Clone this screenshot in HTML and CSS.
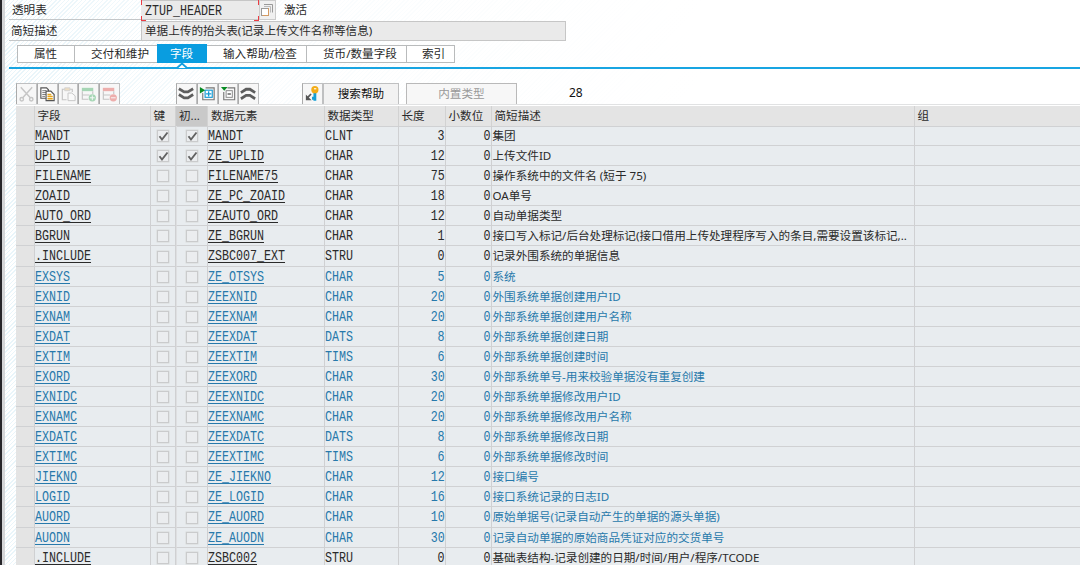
FILE: index.html
```html
<!DOCTYPE html>
<html lang="zh-CN">
<head>
<meta charset="utf-8">
<title>透明表 ZTUP_HEADER</title>
<link rel="stylesheet" href="styles.css">
</head>
<body>
<div class="window">
  <header class="form">
    <div class="form-row first">
      <span class="label">透明表</span>
      <span class="input focus"><span class="mono">ZTUP_HEADER</span><i class="corner tl"></i><i class="corner tr"></i><i class="corner bl"></i><i class="corner br"></i></span>
      <span class="match"><svg width="14" height="14" viewBox="0 0 14 14" fill="none"><path d="M4 1.500h8.500v8" stroke="#999"/><path d="M4 3.500h6.500v6" stroke="#bbb"/><rect x="1.500" y="5.500" width="7" height="7" fill="#fff" stroke="#999"/><path d="M8.500 5v7.500h-6" stroke="#d59a61"/></svg></span>
      <span class="status">激活</span>
    </div>
    <div class="form-row second">
      <span class="label">简短描述</span>
      <span class="input long">单据上传的抬头表(记录上传文件名称等信息)</span>
    </div>
  </header>
  <nav class="tabs">
    <span class="tab t1">属性</span><span class="tab t2">交付和维护</span><span class="tab active">字段</span><span class="tab t4">输入帮助/检查</span><span class="tab t5">货币/数量字段</span><span class="tab t6">索引</span>
  </nav>
  <div class="tabline"><svg class="notch" width="12" height="7" viewBox="0 0 12 7"><path d="M1 6 6 1.500 11 6" fill="#fff" stroke="#14a0e0" stroke-width="1.700"/></svg></div>
  <div class="toolbar">
    <div class="group">
      <span class="btn off"><svg viewBox="0 0 20 20" fill="none" stroke="#777" stroke-width="1.500"><path d="M4 3l10 11M16 3L6 14"/><circle cx="5" cy="15.500" r="1.800"/><circle cx="15" cy="15.500" r="1.800"/></svg></span>
      <span class="btn"><svg viewBox="0 0 20 20" fill="none"><path d="M3 3.500h6l2 2v9H3z" fill="#fff" stroke="#555" stroke-width="1.200"/><path d="M4.500 6.500h4M4.500 8.500h4M4.500 10.500h4M4.500 12.500h3" stroke="#777"/><path d="M8.500 7h5l3.500 3.500v6.500H8.500z" fill="#fff" stroke="#555" stroke-width="1.200"/><path d="M10 10.500h4M10 12.700h5.500M10 15h5.500" stroke="#e6a51c" stroke-width="1.500"/></svg></span>
      <span class="btn off"><svg viewBox="0 0 20 20" fill="none"><path d="M8 16H3.500V5H14v3" stroke="#777" stroke-width="1.200"/><path d="M6 3.500h5.500v3H6z" fill="#ddb46a" stroke="#999"/><path d="M9.500 9h4l3.500 3v5H9.500z" fill="#fff" stroke="#777"/></svg></span>
      <span class="btn off"><svg viewBox="0 0 20 20" fill="none"><rect x="3" y="3.500" width="12" height="3.500" fill="#24a34b"/><path d="M3.500 7v8.500H10M3.500 11H11M14.500 7v3" stroke="#777" stroke-width="1.200"/><circle cx="14" cy="14" r="3.800" fill="#24a34b"/><path d="M11.500 14h5M14 11.500v5" stroke="#fff"/></svg></span>
      <span class="btn off"><svg viewBox="0 0 20 20" fill="none"><rect x="3" y="3.500" width="12" height="3.500" fill="#df3935"/><path d="M3.500 7v8.500H10M3.500 11H11M14.500 7v3" stroke="#777" stroke-width="1.200"/><circle cx="14" cy="14" r="3.800" fill="#df3935"/><path d="M11.500 14h5" stroke="#fff"/></svg></span>
    </div>
    <div class="group nav">
      <span class="btn"><svg viewBox="0 0 20 20" fill="none" stroke="#5d5d5d" stroke-width="2.900"><path d="M2 4.500l5.500 3.300h4L17 4.500M2 10.500l5.500 3.500h4l5.500-3.500"/></svg></span>
      <span class="btn"><svg viewBox="0 0 20 20" fill="none"><path d="M8 3.500h9v12.500H5V9" stroke="#777" stroke-width="1.200"/><rect x="7.500" y="6" width="7.500" height="7.500" fill="#fff" stroke="#159bd5" stroke-width="1.200"/><path d="M8.500 9.800h5.500M11.200 7v5.500" stroke="#159bd5" stroke-width="1.400"/><path d="M2 2.500l5.500 3.500L2 9.500z" fill="#078b23"/></svg></span>
      <span class="btn"><svg viewBox="0 0 20 20" fill="none"><path d="M9 3.500h7.500V16H5V8" stroke="#777" stroke-width="1.200"/><rect x="7.500" y="6.500" width="6.500" height="7" fill="#fff" stroke="#888"/><path d="M9 10h3.500" stroke="#444" stroke-width="1.300"/><path d="M2 2.500h7L5.500 6.500z" fill="#078b23"/></svg></span>
      <span class="btn"><svg viewBox="0 0 20 20" fill="none" stroke="#5d5d5d" stroke-width="2.900"><path d="M2 8.500L7.500 5h4L17 8.500M2 15l5.500-3.500h4L17 15"/></svg></span>
    </div>
    <div class="group help">
      <span class="btn"><svg viewBox="0 0 20 20" fill="none"><path d="M12.500 8v9M11 14.500h-1.500" stroke="#169fd5" stroke-width="3"/><circle cx="12.500" cy="5.500" r="3.800" fill="#f3ac16"/><path d="M11.500 4.500h2.500" stroke="#fff" stroke-width="1.200"/><path d="M8.500 10l-4 4" stroke="#555" stroke-width="1.800"/><path d="M3 10.500v6h6z" fill="#555"/></svg></span>
      <span class="textbtn search">搜索帮助</span>
    </div>
    <span class="textbtn builtin">内置类型</span>
    <span class="count">28</span>
  </div>
  <main class="table" id="table"></main>
</div>
<script src="script.js"></script>
</body>
</html>
```
FILE: styles.css
```css
* { box-sizing: border-box; }
body {
  margin: 0;
  height: 565px;
  overflow: hidden;
  font: 11.6px/16px "Noto Sans", "Noto Sans CJK SC", sans-serif;
  color: #2a2a2a;
  background: #fff;
}
.window {
  height: 565px;
  display: flex;
  flex-direction: column;
  border-left: 2px solid #262529;
  background:
    linear-gradient(#d5d6d8, #d5d6d8) 0 0 / 3px 100% no-repeat,
    linear-gradient(90deg, transparent 14px, rgba(255, 255, 255, .7) 240px, #fff 700px),
    repeating-linear-gradient(135deg, #fff 0 2px, #e9f5fa 2px 3px);
}
.form { height: 43px; flex: none; padding-left: 7px; }
.form-row { display: flex; align-items: stretch; white-space: nowrap; }
.first { height: 21px; }
.second { height: 20px; }
.label { width: 132px; padding: 2px 0 0 3px; border-bottom: 1px solid #c4c7c9; }
.second .label { padding: 2px 0 0 2px; }
.input { position: relative; width: 118px; padding: 2px 0 0 4px; background: #eaeaea; border: 1px solid #c6c6c6; }
.first .input { border-width: 1px 0; }
.input.long { width: 425px; padding: 1px 0 0 3px; }
.match { width: 17px; border: 1px solid #ccc; background: #f0f0f0; display: flex; align-items: center; }
.first .match, .first .input, .first .label { height: 20px; }
.first .match svg { flex: none; }
.status { padding: 2px 0 0 8px; }
.corner { position: absolute; width: 5px; height: 5px; border: 0 solid #ec3c43; }
.tl { top: -1px; left: 0; border-left-width: 1px; }
.tr { top: -1px; right: 0; border-right-width: 1px; }
.bl { bottom: -2px; left: 0; border-left-width: 1px; border-bottom-width: 1px; }
.br { bottom: -2px; right: 0; border-right-width: 1px; border-bottom-width: 1px; }
.mono {
  display: inline-block;
  font: 14px/15px "Liberation Mono", monospace;
  transform: scaleX(.8333);
  transform-origin: left center;
  white-space: pre;
}
.tabs { height: 20px; flex: none; display: flex; align-items: flex-start; padding: 2px 0 0 15px; }
.tab { height: 18px; border: 1px solid #b9bbbc; border-right-width: 0; background: #fff; white-space: nowrap; line-height: 15px; }
.t1 { width: 57px; padding-left: 16px; }
.t2 { width: 83px; padding-left: 16px; }
.active { width: 50px; height: 19px; margin-top: -1px; padding-left: 12px; line-height: 17px; background: #099de0; border-color: #099de0; color: #fff; }
.t4 { width: 99px; padding-left: 16px; border-left: 0; }
.t5 { width: 100px; padding-left: 16px; }
.t6 { width: 49px; padding-left: 15px; border-right-width: 1px; }
.tabline { position: relative; height: 2px; flex: none; margin: 4px 0 0 7px; background: #18a5e2; }
.notch { position: absolute; left: 167px; top: -5px; }
.toolbar { height: 35px; flex: none; display: flex; align-items: flex-end; padding-left: 14px; }
.group { display: flex; }
.nav { margin-left: 56px; }
.help { margin-left: 43px; }
.btn, .textbtn { height: 21px; border: 1px solid #bfc0c1; border-bottom: 0; background: #f7f7f7; }
.btn { width: 20.8px; border-left-color: #aaa; }
.btn svg { display: block; width: 19px; height: 20px; }
.off svg { opacity: .38; }
.textbtn { line-height: 19px; text-align: center; color: #111; }
.search { width: 76px; background: #f2f2f2; }
.builtin { width: 111px; margin-left: 7px; border-color: #b9b9b9; color: #999; }
.count { margin-left: 52px; height: 19px; color: #111; font-size: 12px; }
.table { flex: none; margin-left: 14px; border-top: 1px solid #e1e2e3; }
.row {
  display: grid;
  grid-template-columns: 18.5px 116px 25.5px 32px 116.500px 74px 47px 46px 423px 1fr;
  height: 20.08px;
  color: #2a2a2a;
  background: #e8ecef;
}
.row.blue { color: #2779ab; }
.row.head { height: 21px; border-top: 1px solid #fff; background: #e4e4e4; }
.cell { min-width: 0; border-right: 1px solid #cfd0d2; border-bottom: 1px solid #d0d1d3; white-space: nowrap; line-height: 19px; height: 100%; }
.cell:last-child { border-right: 0; }
.cell .mono { display: block; width: max-content; margin-top: 3px; line-height: 15px; }
.select { background: #e4e4e4; }
.link .mono { text-decoration: underline; text-decoration-thickness: 1px; text-underline-offset: 2px; }
.number .mono { margin-left: auto; transform-origin: right center; }
.number { padding-right: 0; }
.desc { padding-left: 1px; }
.check { display: flex; align-items: center; padding: 1px 0 0 6px; }
.init { padding-left: 9px; border-left: 1px solid #dedfe1; }
.box { width: 12px; height: 12px; border: 1px solid #cacbcc; background: #ebedef; box-shadow: 0 0 0 .5px #d8d9da; }
.box svg { display: block; width: 12px; height: 12px; margin: -1px; }
.head .cell { padding-left: 3px; line-height: 20px; border-right-color: #d2d2d2; }
.head .cell:nth-child(4) { background: #c9c9c9; }
```
FILE: script.js
```javascript
const fields = [
  ["MANDT", 1, "MANDT", "CLNT", 3, "集团"],
  ["UPLID", 1, "ZE_UPLID", "CHAR", 12, "上传文件ID"],
  ["FILENAME", 0, "FILENAME75", "CHAR", 75, "操作系统中的文件名 (短于 75)"],
  ["ZOAID", 0, "ZE_PC_ZOAID", "CHAR", 18, "OA单号"],
  ["AUTO_ORD", 0, "ZEAUTO_ORD", "CHAR", 12, "自动单据类型"],
  ["BGRUN", 0, "ZE_BGRUN", "CHAR", 1, "接口写入标记/后台处理标记(接口借用上传处理程序写入的条目,需要设置该标记,.."],
  [".INCLUDE", 0, "ZSBC007_EXT", "STRU", 0, "记录外围系统的单据信息"],
  ["EXSYS", 0, "ZE_OTSYS", "CHAR", 5, "系统"],
  ["EXNID", 0, "ZEEXNID", "CHAR", 20, "外围系统单据创建用户ID"],
  ["EXNAM", 0, "ZEEXNAM", "CHAR", 20, "外部系统单据创建用户名称"],
  ["EXDAT", 0, "ZEEXDAT", "DATS", 8, "外部系统单据创建日期"],
  ["EXTIM", 0, "ZEEXTIM", "TIMS", 6, "外部系统单据创建时间"],
  ["EXORD", 0, "ZEEXORD", "CHAR", 30, "外部系统单号-用来校验单据没有重复创建"],
  ["EXNIDC", 0, "ZEEXNIDC", "CHAR", 20, "外部系统单据修改用户ID"],
  ["EXNAMC", 0, "ZEEXNAMC", "CHAR", 20, "外部系统单据修改用户名称"],
  ["EXDATC", 0, "ZEEXDATC", "DATS", 8, "外部系统单据修改日期"],
  ["EXTIMC", 0, "ZEEXTIMC", "TIMS", 6, "外部系统单据修改时间"],
  ["JIEKNO", 0, "ZE_JIEKNO", "CHAR", 12, "接口编号"],
  ["LOGID", 0, "ZE_LOGID", "CHAR", 16, "接口系统记录的日志ID"],
  ["AUORD", 0, "ZE_AUORD", "CHAR", 10, "原始单据号(记录自动产生的单据的源头单据)"],
  ["AUODN", 0, "ZE_AUODN", "CHAR", 30, "记录自动单据的原始商品凭证对应的交货单号"],
  [".INCLUDE", 0, "ZSBC002", "STRU", 0, "基础表结构-记录创建的日期/时间/用户/程序/TCODE"]
];
const tick = '<svg viewBox="0 0 12 12" fill="none"><path d="M2.500 6.200 5 9.500 10.500 2.500" stroke="#626262" stroke-width="1.900"/></svg>';
const cell = (kind, content) => `<div class="cell ${kind}">${content}</div>`;
const mono = value => `<span class="mono">${value}</span>`;
const titles = ["", "字段", "键", "初...", "数据元素", "数据类型", "长度", "小数位", "简短描述", "组"];
let html = `<div class="row head">${titles.map(t => cell("", t)).join("")}</div>`;
fields.forEach(([name, key, element, type, length, text], i) => {
  const box = `<span class="box">${key ? tick : ""}</span>`;
  html += `<div class="row ${i > 6 && i < 21 ? "blue" : ""}">` +
    cell("select", "") + cell("link", mono(name)) + cell("check", box) +
    cell("check init", box) + cell("link", mono(element)) + cell("", mono(type)) +
    cell("number", mono(length)) + cell("number", mono(0)) + cell("desc", text) + cell("", "") + "</div>";
});
document.getElementById("table").innerHTML = html;
```
